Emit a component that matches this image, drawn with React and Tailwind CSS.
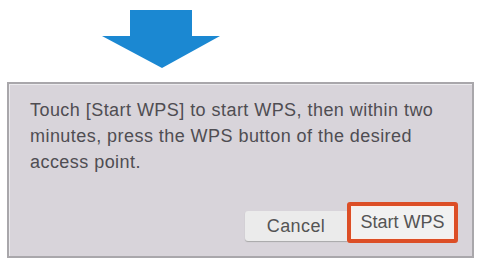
export default function App() {
  return (
    <div className="w-[478px] h-[259px] bg-white overflow-hidden font-['Liberation_Sans',Arial,sans-serif]">
      {/* Down arrow */}
      <div className="h-[82px] pl-[102px] pt-[10px]">
        <svg width="118" height="58" viewBox="0 0 118 58">
          <path d="M28 0h62v26h28L60 58 0 26h28z" fill="#1b88d2" />
        </svg>
      </div>

      {/* Dialog */}
      <div className="ml-[7px] w-[467px] h-[176px] border-2 border-[#a9a7ab] bg-[#d8d4da] flex flex-col justify-between pl-[21px] pr-[14px] pt-[13px] pb-[13px] shadow-[inset_1px_1px_0_#ecebee]">
        <p className="text-[18px] leading-[26px] tracking-[0.45px] text-[#4f4d52]">
          Touch [Start WPS] to start WPS, then within two
          <br />
          minutes, press the WPS button of the desired
          <br />
          access point.
        </p>

        {/* Buttons */}
        <div className="flex justify-end items-end">
          <button className="w-[102px] h-[30px] mb-[2px] bg-[#ebebeb] rounded-l-[3px] text-[18px] tracking-[0.4px] text-[#545454] shadow-[0_1px_1px_#a8a8a8]">
            Cancel
          </button>
          <div className="w-[111px] h-[41px] border-[4px] border-[#dc4e26] rounded-[3px] p-[1px] bg-[#fbeee8]">
            <button className="w-full h-full bg-[#f1f1f1] text-[18px] text-[#545454]">
              Start WPS
            </button>
          </div>
        </div>
      </div>
    </div>
  );
}
